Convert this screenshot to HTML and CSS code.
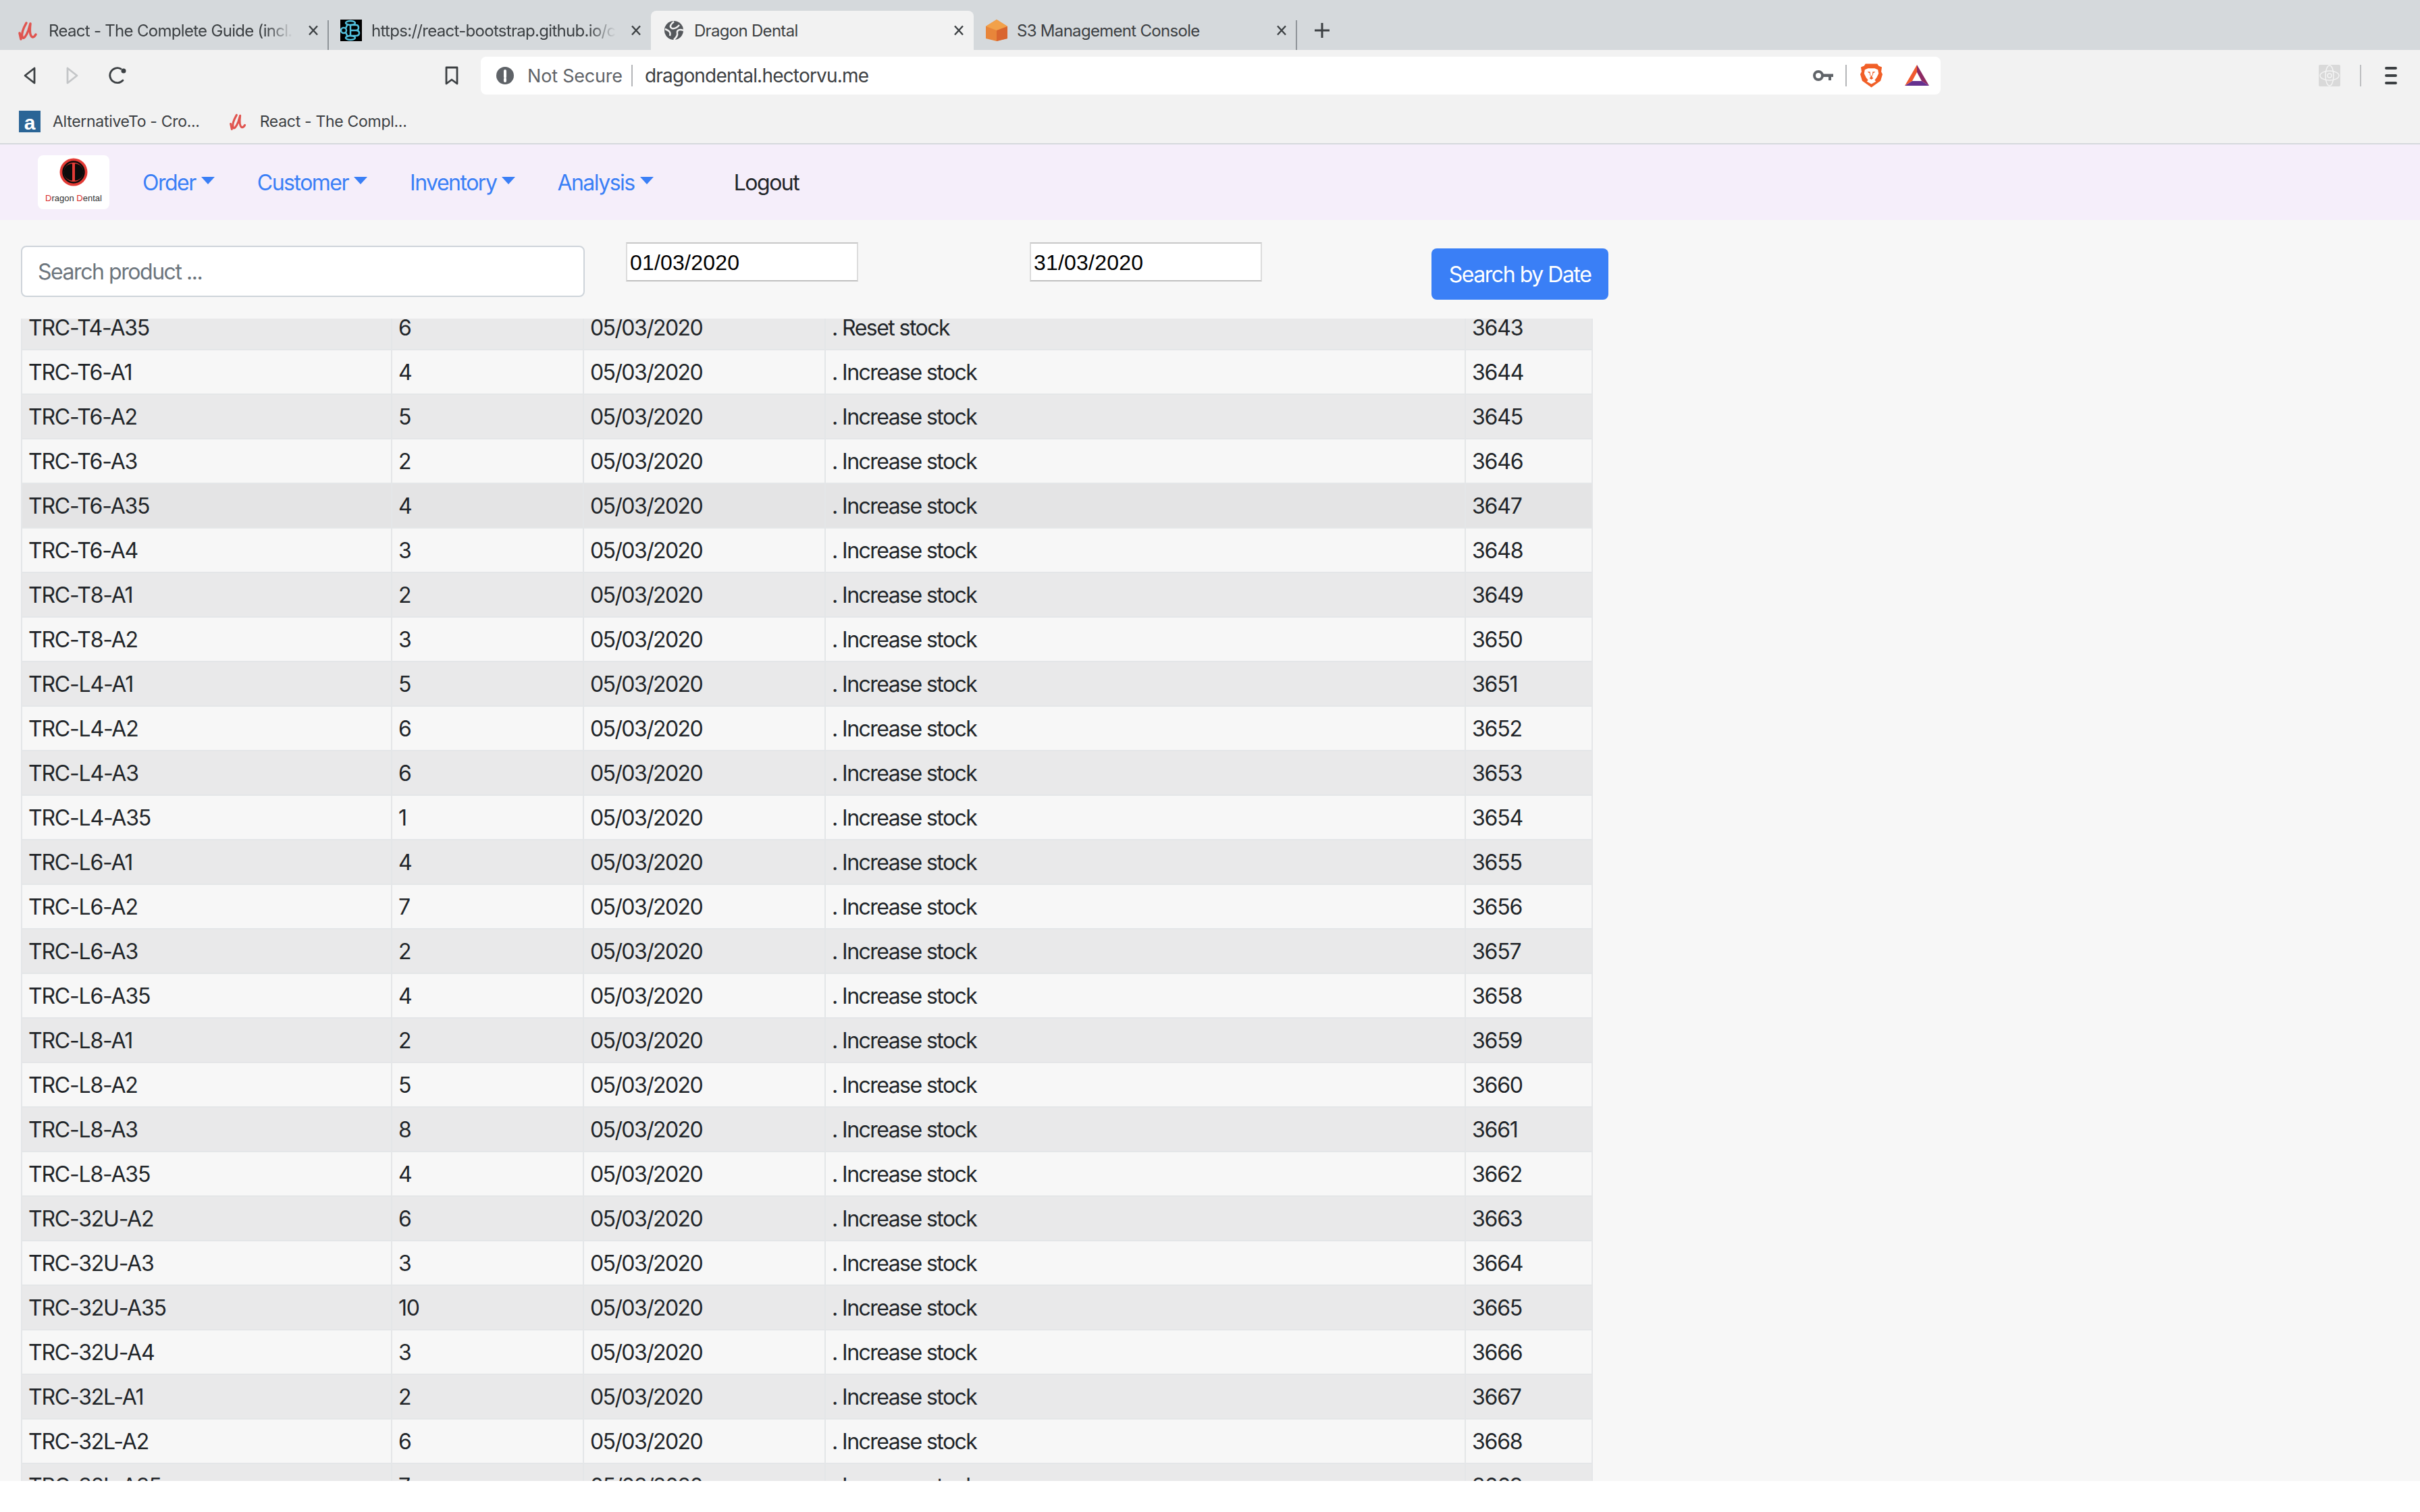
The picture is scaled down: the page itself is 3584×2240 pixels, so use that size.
FILE: index.html
```html
<!DOCTYPE html>
<html lang="en">
<head>
<meta charset="utf-8">
<title>Dragon Dental</title>
<link rel="stylesheet" href="styles.css">
</head>
<body>
<header class="chrome">
  <div class="tabstrip">
    <div class="tab tab-sep">
      <svg class="fav" viewBox="0 0 32 32"><path class="udemy" d="M13 5 C9 12 5 20 7 26 C9 30 13 24 16 16 L19 6 C18 14 18 24 22 26 C24 26 26 24 27 22"/><path class="udemy" d="M3 20 5 29"/></svg>
      <span class="tab-title fade">React - The Complete Guide (incl. </span>
      <svg class="close" viewBox="0 0 16 16"><path d="M2 1.500 14 14.500M14 1.500 2 14.500"/></svg>
    </div>
    <div class="tab">
      <svg class="fav" viewBox="0 0 32 32"><rect width="32" height="32"/><g class="rb"><ellipse cx="15" cy="5" rx="7" ry="3"/><ellipse cx="15" cy="27" rx="7" ry="3"/><circle cx="5" cy="16" r="4"/><path d="M15 7V25M15 8H23Q27 8 27 12T23 16H15M23 16Q28 16 28 20T23 24H15M11 6 8 13M11 26 8 19"/></g></svg>
      <span class="tab-title fade">https://react-bootstrap.github.io/c</span>
      <svg class="close" viewBox="0 0 16 16"><path d="M2 1.500 14 14.500M14 1.500 2 14.500"/></svg>
    </div>
    <div class="tab tab-active">
      <svg class="fav" viewBox="0 0 32 32"><circle class="globe" cx="16" cy="16" r="14"/><path class="globe-cut" d="M16 3 C11 7 9 11 13 13 C18 14 21 12 24 8 M30 16 C25 14 20 15 21 20 C22 24 19 27 16 30 M3 14 C8 16 12 18 10 24"/></svg>
      <span class="tab-title">Dragon Dental</span>
      <svg class="close" viewBox="0 0 16 16"><path d="M2 1.500 14 14.500M14 1.500 2 14.500"/></svg>
    </div>
    <div class="tab tab-sep">
      <svg class="fav" viewBox="0 0 32 32"><path fill="#e8853a" d="M16 0 32 10V28L16 32 0 28V10Z"/><path fill="#d9652f" d="M16 14 32 10V28L16 32Z"/><path fill="#f2a14a" d="M16 0 32 10 16 16 0 10Z"/></svg>
      <span class="tab-title">S3 Management Console</span>
      <svg class="close" viewBox="0 0 16 16"><path d="M2 1.500 14 14.500M14 1.500 2 14.500"/></svg>
    </div>
    <svg class="newtab" viewBox="0 0 24 24"><path d="M12 1V23M1 12H23"/></svg>
  </div>

  <div class="toolbar">
    <div class="nav-buttons">
      <svg class="tool-ic" viewBox="0 0 20 28"><path d="M17 3 3 14 17 25Z"/></svg>
      <svg class="tool-ic tool-off" viewBox="0 0 20 28"><path d="M3 3 17 14 3 25Z"/></svg>
      <svg class="tool-ic reload" viewBox="0 0 28 28"><path d="M22 21A11 11 0 1 1 19 4"/><circle class="tool-dot" cx="23" cy="7" r="3.500"/></svg>
      <svg class="tool-ic bookmark" viewBox="0 0 20 28"><path d="M2 2H18V26L10 20 2 26Z"/></svg>
    </div>
    <div class="omnibox">
      <svg class="alert" viewBox="0 0 26 26"><circle cx="13" cy="13" r="13"/><path d="M13 6V15M13 18V21"/></svg>
      <span class="secure">Not Secure</span>
      <span class="omni-sep"></span>
      <span class="url">dragondental.hectorvu.me</span>
      <svg class="key" viewBox="0 0 30 16"><circle cx="8" cy="8" r="6"/><path d="M14 5.500H30V10H27V15H23V10H14Z"/></svg>
      <span class="omni-sep omni-sep-end"></span>
      <svg class="lion" viewBox="0 0 34 36"><path fill="#f15f27" d="M8 0H26L28 3 33 5 32 12 34 16 31 26 17 36 3 26 0 16 2 12 1 5 6 3Z"/><path fill="#fff" d="M7 9 12 7H22L27 9 28 15 25 21 22 25 24 27 17 31 10 27 12 25 9 21 6 15Z"/><path fill="#f15f27" d="M11 12H15L16 20 14 22 17 24 20 22 18 20 19 12H23L21 14H20L19 18H15L14 14H13Z"/></svg>
      <svg class="bat" viewBox="0 0 36 32"><path fill="#f15a2f" d="M18 0 0 31 11 24 18 11Z"/><path fill="#8d2a63" d="M18 0V11L25 24 36 31Z"/><path fill="#66318f" d="M11 24H25L36 31H0Z"/></svg>
    </div>
    <div class="toolbar-end">
      <svg class="ext" viewBox="0 0 32 32"><rect width="32" height="32" rx="2"/><g class="atom"><ellipse cx="16" cy="16" rx="6" ry="15"/><ellipse cx="16" cy="16" rx="14" ry="7"/><circle cx="16" cy="16" r="3"/></g></svg>
      <span class="end-sep"></span>
      <span class="menu"><i></i><i></i><i></i></span>
    </div>
  </div>

  <div class="bookmarks">
    <div class="bm">
      <svg class="bm-a" viewBox="0 0 32 32"><rect width="32" height="32"/><text x="16" y="28" text-anchor="middle">a</text></svg>
      <span>AlternativeTo - Cro...</span>
    </div>
    <div class="bm">
      <svg class="bm-u" viewBox="0 0 32 32"><path class="udemy" d="M13 5 C9 12 5 20 7 26 C9 30 13 24 16 16 L19 6 C18 14 18 24 22 26 C24 26 26 24 27 22"/><path class="udemy" d="M3 20 5 29"/></svg>
      <span>React - The Compl...</span>
    </div>
  </div>
</header>

<nav class="navbar">
  <a class="brand">
    <svg class="brand-mark" viewBox="0 0 42 42"><circle cx="21" cy="21" r="20.500" fill="#e33b36"/><circle cx="21" cy="21" r="15.500" fill="#e33b36" stroke="#0b0b0b" stroke-width="2.500"/><path d="M19 8.500A12.500 12.500 0 0 0 19 33.500ZM23 8.500A12.500 12.500 0 0 1 23 33.500Z" fill="#0b0b0b"/></svg>
    <span class="brand-text"><b>D</b>ragon <b>D</b>ental</span>
  </a>
  <ul class="nav-list">
    <li class="nav-item nav-order">Order</li>
    <li class="nav-item nav-customer">Customer</li>
    <li class="nav-item nav-inventory">Inventory</li>
    <li class="nav-item nav-analysis">Analysis</li>
  </ul>
  <a class="logout">Logout</a>
</nav>

<main class="content">
  <div class="filters">
    <input class="search" type="text" placeholder="Search product ...">
    <input class="date date-from" type="text" value="01/03/2020">
    <input class="date date-to" type="text" value="31/03/2020">
    <button class="btn-search" type="button">Search by Date</button>
  </div>
  <div class="table-wrap">
    <table class="history">
      <colgroup><col class="c1"><col class="c2"><col class="c3"><col class="c4"><col class="c5"></colgroup>
      <tbody>
        <tr><td>TRC-T4-A35</td><td>6</td><td>05/03/2020</td><td>. Reset stock</td><td>3643</td></tr>
        <tr><td>TRC-T6-A1</td><td>4</td><td>05/03/2020</td><td>. Increase stock</td><td>3644</td></tr>
        <tr><td>TRC-T6-A2</td><td>5</td><td>05/03/2020</td><td>. Increase stock</td><td>3645</td></tr>
        <tr><td>TRC-T6-A3</td><td>2</td><td>05/03/2020</td><td>. Increase stock</td><td>3646</td></tr>
        <tr class="hovered"><td>TRC-T6-A35</td><td>4</td><td>05/03/2020</td><td>. Increase stock</td><td>3647</td></tr>
        <tr><td>TRC-T6-A4</td><td>3</td><td>05/03/2020</td><td>. Increase stock</td><td>3648</td></tr>
        <tr><td>TRC-T8-A1</td><td>2</td><td>05/03/2020</td><td>. Increase stock</td><td>3649</td></tr>
        <tr><td>TRC-T8-A2</td><td>3</td><td>05/03/2020</td><td>. Increase stock</td><td>3650</td></tr>
        <tr><td>TRC-L4-A1</td><td>5</td><td>05/03/2020</td><td>. Increase stock</td><td>3651</td></tr>
        <tr><td>TRC-L4-A2</td><td>6</td><td>05/03/2020</td><td>. Increase stock</td><td>3652</td></tr>
        <tr><td>TRC-L4-A3</td><td>6</td><td>05/03/2020</td><td>. Increase stock</td><td>3653</td></tr>
        <tr><td>TRC-L4-A35</td><td>1</td><td>05/03/2020</td><td>. Increase stock</td><td>3654</td></tr>
        <tr><td>TRC-L6-A1</td><td>4</td><td>05/03/2020</td><td>. Increase stock</td><td>3655</td></tr>
        <tr><td>TRC-L6-A2</td><td>7</td><td>05/03/2020</td><td>. Increase stock</td><td>3656</td></tr>
        <tr><td>TRC-L6-A3</td><td>2</td><td>05/03/2020</td><td>. Increase stock</td><td>3657</td></tr>
        <tr><td>TRC-L6-A35</td><td>4</td><td>05/03/2020</td><td>. Increase stock</td><td>3658</td></tr>
        <tr><td>TRC-L8-A1</td><td>2</td><td>05/03/2020</td><td>. Increase stock</td><td>3659</td></tr>
        <tr><td>TRC-L8-A2</td><td>5</td><td>05/03/2020</td><td>. Increase stock</td><td>3660</td></tr>
        <tr><td>TRC-L8-A3</td><td>8</td><td>05/03/2020</td><td>. Increase stock</td><td>3661</td></tr>
        <tr><td>TRC-L8-A35</td><td>4</td><td>05/03/2020</td><td>. Increase stock</td><td>3662</td></tr>
        <tr><td>TRC-32U-A2</td><td>6</td><td>05/03/2020</td><td>. Increase stock</td><td>3663</td></tr>
        <tr><td>TRC-32U-A3</td><td>3</td><td>05/03/2020</td><td>. Increase stock</td><td>3664</td></tr>
        <tr><td>TRC-32U-A35</td><td>10</td><td>05/03/2020</td><td>. Increase stock</td><td>3665</td></tr>
        <tr><td>TRC-32U-A4</td><td>3</td><td>05/03/2020</td><td>. Increase stock</td><td>3666</td></tr>
        <tr><td>TRC-32L-A1</td><td>2</td><td>05/03/2020</td><td>. Increase stock</td><td>3667</td></tr>
        <tr><td>TRC-32L-A2</td><td>6</td><td>05/03/2020</td><td>. Increase stock</td><td>3668</td></tr>
        <tr><td>TRC-32L-A35</td><td>7</td><td>05/03/2020</td><td>. Increase stock</td><td>3669</td></tr>
      </tbody>
    </table>
  </div>
</main>
<div class="window-bottom"></div>
</body>
</html>
```
FILE: styles.css
```css
* { box-sizing: border-box; }
html, body { margin: 0; padding: 0; }
body {
  width: 3584px;
  height: 2240px;
  overflow: hidden;
  display: flex;
  flex-direction: column;
  background: #fff;
  font-family: Inter, "Liberation Sans", sans-serif;
  color: #212529;
}

/* browser chrome */
.chrome { flex: none; background: #f2f2f2; border-bottom: 2px solid #d5d9dc; height: 214px; }
.tabstrip {
  height: 74px;
  padding: 16px 0 0 8px;
  background: #d5d9dc;
  display: flex;
}
.tab {
  position: relative;
  width: 478px;
  height: 58px;
  padding: 0 14px 0 18px;
  display: flex;
  align-items: center;
  font-size: 24px;
  color: #3c4043;
  letter-spacing: -0.7px;
}
.tab-active { background: #f2f2f2; border-radius: 8px 8px 0 0; }
.tab-sep::after {
  content: "";
  position: absolute;
  right: -1px;
  top: 14px;
  bottom: 0;
  width: 2px;
  background: #8f9499;
}
.fav { width: 32px; height: 32px; flex: none; }
.fav rect { fill: #000; }
.rb { fill: none; stroke: #52c0dd; stroke-width: 2.500; }
.udemy { fill: none; stroke: #e0544f; stroke-width: 3.500; stroke-linecap: round; stroke-linejoin: round; }
.globe { fill: #55585c; }
.globe-cut { fill: none; stroke: #f2f2f2; stroke-width: 2.500; }
.tab-title { flex: 1; min-width: 0; margin-left: 14px; white-space: nowrap; overflow: hidden; }
.fade { -webkit-mask-image: linear-gradient(to right, #000 88%, transparent 99%); mask-image: linear-gradient(to right, #000 88%, transparent 99%); margin-right: 10px; }
.close { width: 16px; height: 16px; flex: none; margin-left: 8px; }
.close path { stroke: #3c4043; stroke-width: 2.400; fill: none; }
.newtab { width: 24px; height: 24px; flex: none; margin: 17px 0 0 26px; }
.newtab path { stroke: #3c4043; stroke-width: 3; fill: none; }

.toolbar { height: 76px; padding-top: 10px; display: flex; align-items: flex-start; }
.nav-buttons { width: 712px; height: 56px; display: flex; align-items: center; padding-left: 34px; }
.tool-ic { width: 20px; height: 28px; flex: none; margin-right: 43px; }
.tool-ic path { fill: none; stroke: #3c4043; stroke-width: 2.800; stroke-linejoin: round; stroke-linecap: round; }
.tool-off path { stroke: #c4c6c8; }
.reload { width: 28px; margin-right: 0; }
.tool-dot { fill: #3c4043; }
.bookmark { margin: 0 0 0 471px; }
.omnibox {
  width: 2162px;
  height: 56px;
  background: #fff;
  border-radius: 8px;
  display: flex;
  align-items: center;
  padding-left: 23px;
  color: #3c4043;
  font-size: 27px;
  letter-spacing: -0.2px;
}
.alert { width: 26px; height: 26px; flex: none; }
.alert circle { fill: #5f6368; }
.alert path { stroke: #fff; stroke-width: 4; stroke-linecap: round; fill: none; }
.secure { margin-left: 20px; color: #5f6368; width: 154px; white-space: nowrap; flex: none; }
.omni-sep { width: 2px; height: 32px; background: #b4b6b8; flex: none; margin: 0 18px 0 0; }
.url { width: 1400px; font-size: 28px; letter-spacing: -0.8px; white-space: nowrap; flex: none; }
.key { width: 30px; height: 16px; flex: none; margin-left: 330px; }
.key circle { fill: none; stroke: #5f6368; stroke-width: 4; }
.key path { fill: #5f6368; }
.omni-sep-end { margin: 0 0 0 18px; }
.lion { width: 33px; height: 36px; flex: none; margin-left: 20px; }
.bat { width: 36px; height: 32px; flex: none; margin-left: 33px; }
.toolbar-end { flex: 1; height: 56px; display: flex; align-items: center; padding-left: 560px; }
.ext { width: 32px; height: 32px; flex: none; }
.ext rect { fill: #d9d9d9; }
.atom { fill: none; stroke: #f4f4f4; stroke-width: 1.500; }
.end-sep { width: 2px; height: 32px; margin-left: 29px; background: #bdbfc1; }
.menu { width: 18px; margin-left: 35px; display: flex; flex-direction: column; gap: 7.500px; }
.menu i { display: block; height: 3.500px; background: #3c4043; border-radius: 2px; }

.bookmarks { height: 62px; display: flex; align-items: center; padding: 0 0 2px 28px; gap: 43px; font-size: 23px; color: #3c4043; letter-spacing: -0.3px; }
.bm { display: flex; align-items: center; gap: 18px; }
.bm-a { width: 32px; height: 32px; flex: none; }
.bm-a rect { fill: #2b6596; }
.bm-a text { fill: #fff; font: bold 30px "Liberation Sans", sans-serif; }
.bm-u { width: 28px; height: 28px; flex: none; }

/* app navbar */
.navbar {
  flex: none;
  height: 112px;
  background: #f5eefa;
  display: flex;
  align-items: center;
  font-size: 32px;
  letter-spacing: -1.5px;
  padding-left: 56px;
}
.brand {
  width: 106px;
  height: 80px;
  background: #fff;
  border-radius: 8px;
  display: flex;
  flex-direction: column;
  align-items: center;
  padding-top: 4px;
  flex: none;
}
.brand-mark { width: 42px; height: 42px; flex: none; }
.brand-text { font: 13px/16px "Liberation Sans", sans-serif; letter-spacing: 0; margin-top: 10px; color: #333; white-space: nowrap; }
.brand-text b { color: #d92c2c; font-weight: 400; }
.nav-list { list-style: none; margin: 0 0 0 49px; padding: 0; display: flex; }
.nav-item {
  color: #3a7ff6;
  display: flex;
  align-items: center;
  white-space: nowrap;
}
.nav-item::after {
  content: "";
  width: 0;
  height: 0;
  margin: 0 0 6px 8px;
  border-style: solid;
  border-width: 11px 10px 0;
  border-color: #3a7ff6 transparent transparent;
}
.nav-order { margin-right: 63px; }
.nav-customer { margin-right: 63px; }
.nav-inventory { margin-right: 62px; }
.logout { margin-left: 119px; color: #212529; }

/* content */
.content { flex: none; height: 1868px; background: #f7f7f7; padding-left: 31px; display: flex; flex-direction: column; overflow: hidden; }
.filters { flex: none; height: 146px; display: flex; align-items: flex-start; }
.search {
  width: 835px;
  height: 76px;
  margin-top: 38px;
  padding: 0 23px;
  background: #fff;
  border: 2px solid #ced4da;
  border-radius: 8px;
  font: 32px Inter, "Liberation Sans", sans-serif;
  letter-spacing: -1.45px;
  color: #495057;
}
.search::placeholder { color: #6c757d; opacity: 1; }
.date {
  width: 344px;
  height: 58px;
  margin-top: 33px;
  padding: 2px 4px 0;
  background: #fff;
  border: 2px solid #dcdcdc;
  border-top-color: #c8c8c8;
  border-bottom-color: #c0c0c0;
  border-radius: 0;
  font: 32px "Liberation Sans", sans-serif;
  letter-spacing: 0.2px;
  color: #000;
}
.date-from { margin-left: 61px; }
.date-to { margin-left: 254px; }
.btn-search {
  width: 262px;
  height: 76px;
  margin: 42px 0 0 251px;
  padding: 0;
  background: #3a7ff6;
  border: 0;
  border-radius: 8px;
  color: #fff;
  font: 32px Inter, "Liberation Sans", sans-serif;
  letter-spacing: -1.45px;
}
.table-wrap { flex: 1; min-height: 0; overflow: hidden; }
.history {
  width: 2326px;
  margin-top: -21px;
  table-layout: fixed;
  border-collapse: collapse;
  font-size: 32px;
  letter-spacing: -1.2px;
}
.c1 { width: 548px; }
.c2 { width: 284px; }
.c3 { width: 358px; }
.c4 { width: 948px; }
.c5 { width: 188px; }
.history td {
  height: 66px;
  padding: 0 9px;
  border: 2px solid #e4e6e8;
  white-space: nowrap;
}
.history td:nth-child(3) { letter-spacing: -1.6px; }
.history td:nth-child(4) { letter-spacing: -1.55px; }
.history tr:nth-child(odd) { background: #e9e9ea; }
.history tr.hovered { background: #e4e4e5; }
.window-bottom { flex: 1; background: #fff; }
```
